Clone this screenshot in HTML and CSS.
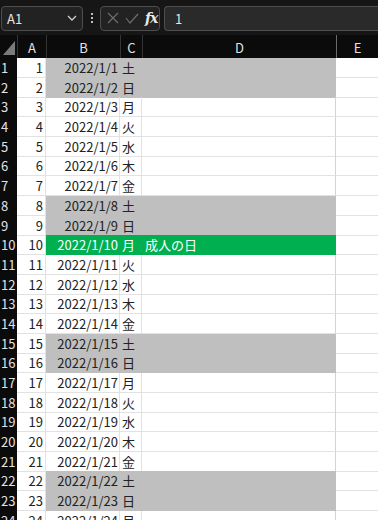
FILE: index.html
```html
<!DOCTYPE html>
<html lang="ja">
<head>
<meta charset="utf-8">
<link rel="stylesheet" href="styles.css">
</head>
<body>
<div class="toolbar">
  <div class="namebox"><span class="nb-text">A1</span>
    <svg class="chev" width="10" height="6" viewBox="0 0 10 6"><path d="M1 1 L5 5 L9 1" fill="none" stroke="#d0d0d0" stroke-width="1.3"/></svg>
  </div>
  <div class="dots"><i></i><i></i><i></i></div>
  <div class="fbtns">
    <svg width="12" height="12" viewBox="0 0 12 12"><path d="M1 1 L11 11 M11 1 L1 11" stroke="#6e6e6e" stroke-width="1.2"/></svg>
    <svg width="14" height="11" viewBox="0 0 14 11"><path d="M1 5 L5 10 L13 1" fill="none" stroke="#6e6e6e" stroke-width="1.2"/></svg>
    <span class="fx">fx</span>
  </div>
  <div class="finput">1</div>
</div>
<div class="sheet">
  <div class="row head">
    <div class="corner"><span class="tri"></span></div>
    <div class="ch">A</div><div class="ch">B</div><div class="ch">C</div><div class="ch">D</div><div class="ch e">E</div>
  </div>
  <div class="row we"><div class="rh">1</div><div class="c a">1</div><div class="c b">2022/1/1</div><div class="c cc">土</div><div class="c d"></div><div class="c e"></div></div>
  <div class="row we"><div class="rh">2</div><div class="c a">2</div><div class="c b">2022/1/2</div><div class="c cc">日</div><div class="c d"></div><div class="c e"></div></div>
  <div class="row"><div class="rh">3</div><div class="c a">3</div><div class="c b">2022/1/3</div><div class="c cc">月</div><div class="c d"></div><div class="c e"></div></div>
  <div class="row"><div class="rh">4</div><div class="c a">4</div><div class="c b">2022/1/4</div><div class="c cc">火</div><div class="c d"></div><div class="c e"></div></div>
  <div class="row"><div class="rh">5</div><div class="c a">5</div><div class="c b">2022/1/5</div><div class="c cc">水</div><div class="c d"></div><div class="c e"></div></div>
  <div class="row"><div class="rh">6</div><div class="c a">6</div><div class="c b">2022/1/6</div><div class="c cc">木</div><div class="c d"></div><div class="c e"></div></div>
  <div class="row"><div class="rh">7</div><div class="c a">7</div><div class="c b">2022/1/7</div><div class="c cc">金</div><div class="c d"></div><div class="c e"></div></div>
  <div class="row we"><div class="rh">8</div><div class="c a">8</div><div class="c b">2022/1/8</div><div class="c cc">土</div><div class="c d"></div><div class="c e"></div></div>
  <div class="row we"><div class="rh">9</div><div class="c a">9</div><div class="c b">2022/1/9</div><div class="c cc">日</div><div class="c d"></div><div class="c e"></div></div>
  <div class="row hol"><div class="rh">10</div><div class="c a">10</div><div class="c b">2022/1/10</div><div class="c cc">月</div><div class="c d">成人の日</div><div class="c e"></div></div>
  <div class="row"><div class="rh">11</div><div class="c a">11</div><div class="c b">2022/1/11</div><div class="c cc">火</div><div class="c d"></div><div class="c e"></div></div>
  <div class="row"><div class="rh">12</div><div class="c a">12</div><div class="c b">2022/1/12</div><div class="c cc">水</div><div class="c d"></div><div class="c e"></div></div>
  <div class="row"><div class="rh">13</div><div class="c a">13</div><div class="c b">2022/1/13</div><div class="c cc">木</div><div class="c d"></div><div class="c e"></div></div>
  <div class="row"><div class="rh">14</div><div class="c a">14</div><div class="c b">2022/1/14</div><div class="c cc">金</div><div class="c d"></div><div class="c e"></div></div>
  <div class="row we"><div class="rh">15</div><div class="c a">15</div><div class="c b">2022/1/15</div><div class="c cc">土</div><div class="c d"></div><div class="c e"></div></div>
  <div class="row we"><div class="rh">16</div><div class="c a">16</div><div class="c b">2022/1/16</div><div class="c cc">日</div><div class="c d"></div><div class="c e"></div></div>
  <div class="row"><div class="rh">17</div><div class="c a">17</div><div class="c b">2022/1/17</div><div class="c cc">月</div><div class="c d"></div><div class="c e"></div></div>
  <div class="row"><div class="rh">18</div><div class="c a">18</div><div class="c b">2022/1/18</div><div class="c cc">火</div><div class="c d"></div><div class="c e"></div></div>
  <div class="row"><div class="rh">19</div><div class="c a">19</div><div class="c b">2022/1/19</div><div class="c cc">水</div><div class="c d"></div><div class="c e"></div></div>
  <div class="row"><div class="rh">20</div><div class="c a">20</div><div class="c b">2022/1/20</div><div class="c cc">木</div><div class="c d"></div><div class="c e"></div></div>
  <div class="row"><div class="rh">21</div><div class="c a">21</div><div class="c b">2022/1/21</div><div class="c cc">金</div><div class="c d"></div><div class="c e"></div></div>
  <div class="row we"><div class="rh">22</div><div class="c a">22</div><div class="c b">2022/1/22</div><div class="c cc">土</div><div class="c d"></div><div class="c e"></div></div>
  <div class="row we"><div class="rh">23</div><div class="c a">23</div><div class="c b">2022/1/23</div><div class="c cc">日</div><div class="c d"></div><div class="c e"></div></div>
  <div class="row"><div class="rh">24</div><div class="c a">24</div><div class="c b">2022/1/24</div><div class="c cc">月</div><div class="c d"></div><div class="c e"></div></div>
</div>
</body>
</html>
```

FILE: styles.css
```css
* { box-sizing: border-box; }
html, body { margin: 0; padding: 0; }
body {
  width: 378px;
  height: 520px;
  overflow: hidden;
  background: #ffffff;
  font-family: "Noto Sans CJK JP", "Noto Sans", sans-serif;
  font-size: 13px;
  color: #222;
}
.toolbar {
  height: 35px;
  background: #161616;
  display: flex;
  align-items: center;
  padding: 1px 0 0 1px;
}
.namebox {
  width: 82px;
  height: 25px;
  border: 1px solid #4e4e4e;
  border-radius: 4px;
  background: #222;
  display: flex;
  align-items: center;
  justify-content: space-between;
  padding: 0 5px 0 5px;
  color: #e6e6e6;
  font-size: 13px;
}
.dots {
  width: 17px;
  display: flex;
  flex-direction: column;
  align-items: center;
  gap: 2px;
}
.dots i { width: 2px; height: 2px; background: #bdbdbd; display: block; }
.fbtns {
  width: 60px;
  height: 25px;
  border: 1px solid #4e4e4e;
  border-radius: 4px;
  background: #222;
  display: flex;
  align-items: center;
  gap: 6px;
  padding-left: 6px;
}
.fx {
  font-family: "DejaVu Serif", "Liberation Serif", serif;
  font-style: italic;
  font-weight: bold;
  color: #e8e8e8;
  font-size: 14px;
  letter-spacing: -1px;
}
.finput {
  flex: 1;
  height: 25px;
  margin-left: 4px;
  border: 1px solid #4e4e4e;
  border-right: none;
  border-radius: 4px 0 0 4px;
  background: #2a2a2a;
  color: #e6e6e6;
  display: flex;
  align-items: center;
  padding-left: 10px;
}
.sheet { display: flex; flex-direction: column; }
.row {
  display: grid;
  grid-template-columns: 17px 29px 74px 22px 194px 42px;
  height: 19.7px;
}
.row.head { height: 23px; background: #0b0b0b; }
.corner { position: relative; background: #0b0b0b; }
.tri {
  position: absolute;
  right: 2px;
  bottom: 3px;
  width: 0; height: 0;
  border-left: 12px solid transparent;
  border-bottom: 14px solid #7b7b7b;
}
.ch {
  color: #e2e2e2;
  display: flex;
  align-items: center;
  justify-content: center;
  border-left: 1px solid #333;
  padding-top: 2px;
}
.ch.e { border-left: 1px solid #6a6a6a; }
.rh {
  background: #0b0b0b;
  color: #e2e2e2;
  padding-left: 1px;
  line-height: 19px;
  white-space: nowrap;
  overflow: visible;
}
.c {
  border-right: 1px solid #e2e2e2;
  border-bottom: 1px solid #e2e2e2;
  line-height: 19px;
  white-space: nowrap;
  overflow: hidden;
}
.c.a, .c.b { text-align: right; padding-right: 2px; }
.c.b { padding-right: 1px; }
.c.cc { padding-left: 2px; overflow: visible; }
.c.d { padding-left: 3px; }
.c.e { border-right: none; }
.c.d { border-right-color: #d4d4d4; }
.we .b, .we .cc, .we .d { background: #bfbfbf; border-color: #bfbfbf; }
.we .b { border-bottom-color: #bfbfbf; }
.hol .b, .hol .cc, .hol .d { background: #00b050; border-color: #00b050; color: #ffffff; }
```
